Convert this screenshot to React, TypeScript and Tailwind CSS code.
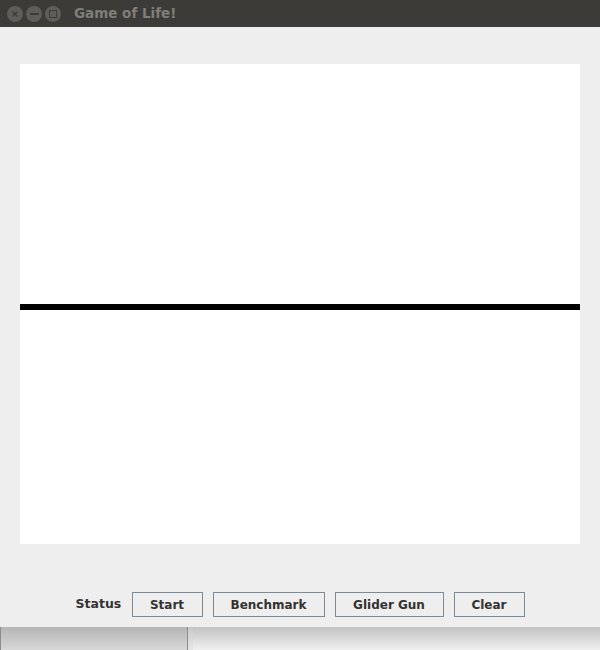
const WinButton = ({ children }: { children: React.ReactNode }) => (
    <div className="w-[16px] h-[16px] rounded-full bg-[#5e5d58] flex items-center justify-center">
        {children}
    </div>
);

const SwingButton = ({ label, w }: { label: string; w: string }) => (
    <button
        className={`${w} h-[25px] border border-[#7a8a99] bg-[#eeeeee] text-[12px] font-bold text-[#333333] flex items-center justify-center`}
    >
        {label}
    </button>
);

const App = () => {
    return (
        <div className="w-[600px] h-[650px] flex flex-col bg-[#eeeeee] overflow-hidden" style={{ fontFamily: '"DejaVu Sans", sans-serif' }}>
            {/* Title bar */}
            <div className="h-[27px] bg-[#3c3b37] flex items-center pl-[7px] gap-[3px] shrink-0">
                <WinButton>
                    <svg width="8" height="8" viewBox="0 0 8 8">
                        <path d="M1.5 1.5 L6.5 6.5 M6.5 1.5 L1.5 6.5" stroke="#3c3b37" strokeWidth="1.4" />
                    </svg>
                </WinButton>
                <WinButton>
                    <div className="w-[9px] h-[2px] bg-[#3c3b37]" />
                </WinButton>
                <WinButton>
                    <div className="w-[8px] h-[8px] border-[1.5px] border-[#3c3b37]" />
                </WinButton>
                <span className="ml-[10px] text-[13.5px] font-bold text-[#7f7e79]">Game of Life!</span>
            </div>

            {/* Window body */}
            <div className="flex flex-col px-[20px] pt-[37px] shrink-0">
                <div className="h-[480px] bg-white flex flex-col pt-[240px]">
                    <div className="h-[6px] bg-black" />
                </div>
                <div className="h-[83px] flex items-start justify-center pt-[48px] gap-[10px]">
                    <span className="w-[46px] text-[12.5px] font-bold text-[#333333] h-[25px] flex items-center">Status</span>
                    <SwingButton label="Start" w="w-[71px]" />
                    <SwingButton label="Benchmark" w="w-[112px]" />
                    <SwingButton label="Glider Gun" w="w-[109px]" />
                    <SwingButton label="Clear" w="w-[71px]" />
                </div>
            </div>

            {/* Desktop behind window */}
            <div className="flex-1 flex">
                <div className="w-[188px] border-l border-r border-[#8c8c8c] bg-gradient-to-b from-[#b4b4b4] to-[#d8d8d8]" />
                <div className="w-[5px] bg-gradient-to-b from-[#c8c8c8] to-[#e6e6e6]" />
                <div className="flex-1 bg-gradient-to-b from-[#c2c2c2] to-[#f0f0f0]" />
            </div>
        </div>
    );
};

export default App;
